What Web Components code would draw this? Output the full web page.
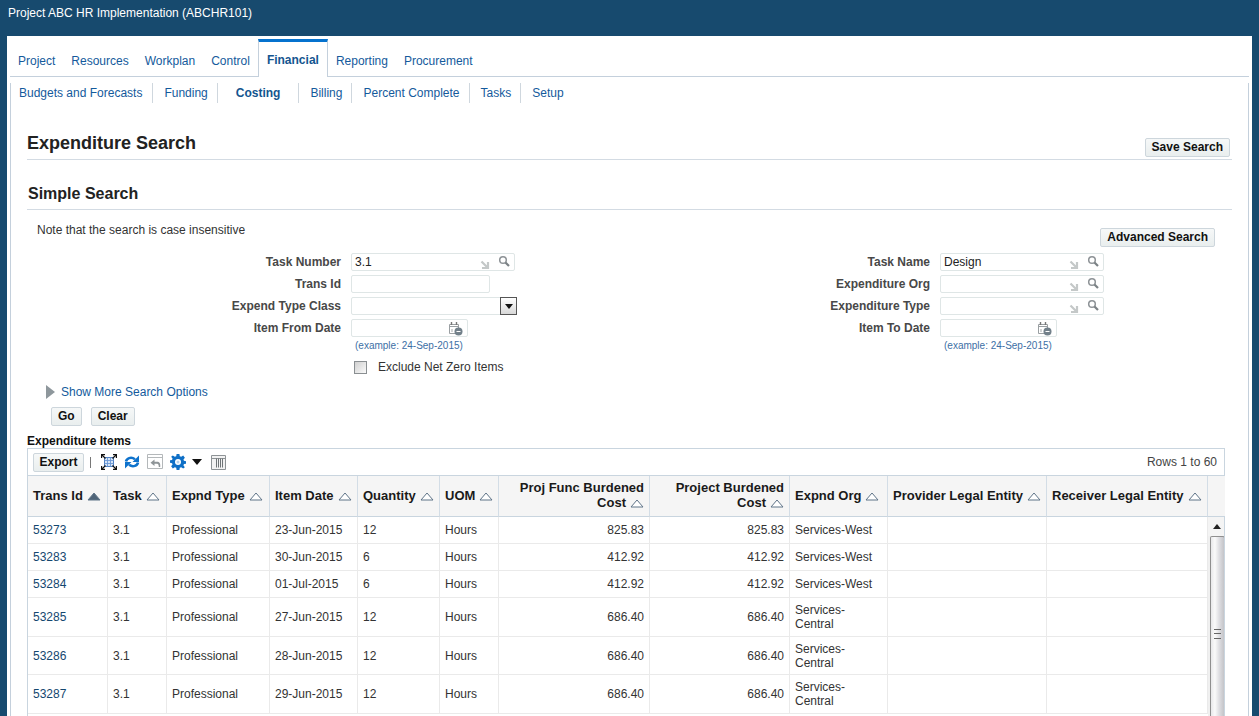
<!DOCTYPE html>
<html lang="en"><head><meta charset="utf-8"><title>Expenditure Search</title>
<style>
html,body{margin:0;height:716px;overflow:hidden;background:#174a6e;font:12px "Liberation Sans",Arial,sans-serif;color:#333}
</style></head><body>
<hr-app></hr-app>
<script>
const ICONS={
 lov:`<svg width="36" height="16" viewBox="0 0 36 16"><path d="M3.500 7.500l6 6M10 8v6H4" fill="none" stroke="#c4c8c8" stroke-width="2.200"/><circle cx="25" cy="6" r="3.300" fill="none" stroke="#8d9296" stroke-width="1.500"/><path d="M27.500 8.500l3.500 3.500" stroke="#7c8286" stroke-width="2.200"/></svg>`,
 cal:`<svg width="15" height="15" viewBox="0 0 15 15"><path d="M1.500 3.500h9v9h-9z" fill="#fff" stroke="#9a9fa2"/><path d="M3.500 1v3M8.500 1v3" stroke="#777" stroke-width="1.400"/><path d="M1.500 5.500h9" stroke="#9a9fa2"/><path d="M4 8v3" stroke="#a5a9ab"/><circle cx="10.500" cy="10.500" r="4" fill="#72808a"/><path d="M8.500 10.500h4" stroke="#fff"/></svg>`,
 detach:`<svg width="16" height="16" viewBox="0 0 16 16"><rect x="3.500" y="3.500" width="9" height="9" fill="#d5e4f7" stroke="#4f7fc0"/><path d="M6.500 3.500v9M9.500 3.500v9M3.500 6.500h9M3.500 9.500h9" stroke="#6c98d6" stroke-width=".9"/><path d="M1 1l3.500 3.500M15 1l-3.500 3.500M1 15l3.500-3.500M15 15l-3.500-3.500" stroke="#111" stroke-width="1.200"/><path d="M.6 4V.6H4M12 .6h3.400V4M.6 12v3.400H4M15.400 12v3.400H12" fill="none" stroke="#111" stroke-width="1.200"/></svg>`,
 refresh:`<svg width="16" height="16" viewBox="0 0 16 16"><path d="M2 7.500C2.600 4.500 6.800 2.300 11 5.200" fill="none" stroke="#0e72cc" stroke-width="2.600"/><path d="M15 1.500V8H8.500z" fill="#0e72cc"/><path d="M14 8.500C13.400 11.500 9.200 13.700 5 10.800" fill="none" stroke="#0e72cc" stroke-width="2.600"/><path d="M1 14.500V8h6.500z" fill="#0e72cc"/></svg>`,
 revert:`<svg width="16" height="16" viewBox="0 0 16 16"><path d="M.5 .5h15v14H.5z" fill="#fff" stroke="#b4b8ba"/><path d="M.5 3.500h15" stroke="#b4b8ba"/><path d="M7.500 5.500L3.500 8.800l4 3.200V9.800h2.500c1.200 0 1.800.9 1.800 3.200h1.400c.5-3.800-.8-5.300-3-5.300H7.500z" fill="#8f9598"/></svg>`,
 gear:`<svg width="16" height="16" viewBox="0 0 17 17"><path d="M7 0h3l.4 2.300 1.500.7L14 1.700 15.800 4 14.300 5.800l.5 1.500 2.200.4v2.600l-2.200.4-.5 1.500 1.500 1.800L14 15.300l-2.100-1.300-1.500.7L10 17H7l-.4-2.300-1.500-.7L3 15.300 1.200 13l1.500-1.800-.5-1.500L0 9.300V6.700l2.200-.4.500-1.500L1.200 3 3 1.700 5.100 3l1.500-.7z" fill="#0e6fc6"/><circle cx="8.500" cy="8.500" r="3.200" fill="#fff"/><circle cx="8.500" cy="8.500" r="1.600" fill="#0e6fc6" opacity=".3"/></svg>`,
 drop:`<svg width="10" height="6" viewBox="0 0 10 6"><path d="M0 0h10L5 6z" fill="#111"/></svg>`,
 freeze:`<svg width="15" height="15" viewBox="0 0 15 15"><path d="M.5 .5h14v14H.5z" fill="#f2f2f2" stroke="#8e9396"/><path d="M.5 3.500h14" stroke="#8e9396"/><path d="M5.500 3.500v9M7.500 3.500v9M9.500 3.500v9M11.500 3.500v9" stroke="#6f7477"/></svg>`
};
function el(name,html,init){
 customElements.define(name,class extends HTMLElement{
  connectedCallback(){ if(this.shadowRoot) return; const r=this.attachShadow({mode:'open'}); r.innerHTML=typeof html==='function'?html(this):html; if(init) init(r,this);}
 });
}
el('x-btn',h=>`<style>:host{display:inline-flex}button{all:unset;box-sizing:border-box;display:block;height:19px;padding:0 ${h.getAttribute('pad')||6}px;border:1px solid #cdd6dc;border-radius:2px;background:linear-gradient(#f6f8f8,#e9eeee);font:bold 12px/17px "Liberation Sans",Arial,sans-serif;color:#111}</style><button><slot></slot></button>`);
el('app-header',`<style>:host{display:flex;align-items:flex-start;height:36px;box-sizing:border-box;padding:6px 8px 0;color:#fff;font-size:12px;line-height:14px}</style><slot></slot>`);
el('main-tabs',`<style>:host{display:flex;height:41px;box-sizing:border-box;margin:0 3px;padding:3px 0 0 0;border-bottom:1px solid #c4d0dc}</style><slot></slot>`);
el('main-tab',`<style>
:host{display:block;box-sizing:border-box;height:38px;padding:15px 8px 0;color:#145a9c;font-size:12px;line-height:14px}
:host([active]){height:38px;margin-bottom:-1px;padding:11px 8px 0;border-top:3px solid #0572ce;border-left:1px solid #c4d0dc;border-right:1px solid #c4d0dc;background:#fff;font-weight:bold;color:#14558f}
</style><slot></slot>`);
el('sub-tabs',`<style>:host{display:flex;align-items:center;height:20px;margin-top:6px}</style><slot></slot>`);
el('sub-tab',`<style>
:host{display:block;box-sizing:border-box;height:20px;padding:3px 9px 0 11px;border-right:1px solid #cfd7de;color:#145a9c;font-size:12px;line-height:14px}
:host(:first-child){padding:3px 10px 0 8px}
:host(:last-child){border-right:0}
:host([active]){padding:3px 18px 0 18px;font-weight:bold;color:#14558f}
</style><slot></slot>`);
el('page-title',`<style>
:host{display:flex;justify-content:space-between;align-items:flex-end;box-sizing:border-box;border-bottom:1px solid #d3dbe3;height:30px;padding:0 2px 2px 0}
h1{margin:0 0 3px;font:bold 18px/21px "Liberation Sans",Arial,sans-serif;color:#222}
</style><h1><slot></slot></h1><slot name="act"></slot>`);
el('sec-title',`<style>
:host{display:block;box-sizing:border-box;height:26px;border-bottom:1px solid #d3dbe3}
h2{margin:0 0 0 1px;font:bold 16px/19px "Liberation Sans",Arial,sans-serif;color:#222}
</style><h2><slot></slot></h2>`);
el('form-row',h=>{
 const t=h.getAttribute('type')||'text',v=h.getAttribute('value')||'';
 const w={lov:164,text:139,select:166,date:117}[t];
 const icon=t==='lov'?`<span class="i lov">${ICONS.lov}</span>`:t==='date'?`<span class="i date">${ICONS.cal}</span>`:t==='select'?`<span class="dd">${ICONS.drop}</span>`:'';
 return `<style>
 :host{display:flex;align-items:center;height:22px}
 label{box-sizing:border-box;width:314px;text-align:right;font-weight:bold;color:#484848;line-height:14px}
 .f{position:relative;box-sizing:border-box;width:${w}px;height:18px;margin-left:10px;padding-left:3px;border:1px solid #dfe6e6;border-radius:2px;background:#fff;line-height:16px;color:#222}
 .i{position:absolute;top:0;line-height:0}.lov{right:0}.date{right:4px;top:1px}
 .dd{position:absolute;right:-1px;top:-1px;box-sizing:border-box;width:17px;height:18px;border:1px solid #555;background:linear-gradient(#fff,#d8d8d8);display:flex;align-items:center;justify-content:center}
 .dd svg{width:8px;height:5px}
 </style><label><slot></slot></label><div class="f">${v}${icon}</div>`;
});
el('form-hint',`<style>:host{display:block;height:15px;margin-left:328px;font-size:10px;line-height:14px;color:#3d6fa5}</style><slot></slot>`);
el('form-check',`<style>
:host{display:flex;align-items:center;margin:3px 0 0 327px;height:20px}
i{box-sizing:border-box;width:13px;height:13px;border:1px solid #8a8f92;background:linear-gradient(135deg,#d0d0d0,#fafafa);margin-right:11px}
span{color:#333;line-height:14px}
</style><i></i><span><slot></slot></span>`);
el('show-more',`<style>
:host{display:flex;align-items:center;height:16px;margin:7px 0 0 19px}
i{width:0;height:0;border-left:9px solid #8e979c;border-top:7px solid transparent;border-bottom:7px solid transparent;margin-right:6px}
span{color:#145a9c}
</style><i></i><span><slot></slot></span>`);
el('search-form',`<style>:host{display:grid;grid-template-columns:589px 1fr}</style><slot></slot>`);
const cols=[80,59,103,88,82,59,151,140,98,159,161,17];
const head=[['Trans Id',1],['Task'],['Expnd Type'],['Item Date'],['Quantity'],['UOM'],['Proj Func Burdened<br>Cost',0,1],['Project Burdened<br>Cost',0,1],['Expnd Org'],['Provider Legal Entity'],['Receiver Legal Entity'],['']];
const rows=[
['53273','23-Jun-2015','12','825.83','Services-West',27],
['53283','30-Jun-2015','6','412.92','Services-West',27],
['53284','01-Jul-2015','6','412.92','Services-West',27],
['53285','27-Jun-2015','12','686.40','Services-<br>Central',39],
['53286','28-Jun-2015','12','686.40','Services-<br>Central',38],
['53287','29-Jun-2015','12','686.40','Services-<br>Central',39]];
const tri=f=>`<svg class="s" width="14" height="9" viewBox="0 0 14 9"><path d="M7 1L13 8H1z" fill="${f?'#4f6478':'#fff'}" stroke="#5f7488"/></svg>`;
const colgroup=c=>`<colgroup>${c.map(w=>`<col style="width:${w}px">`).join('')}</colgroup>`;
el('data-table',()=>`<style>
:host{display:block;box-sizing:border-box;width:1198px;border:1px solid #c9d5df;height:300px}
.tb{display:flex;align-items:center;box-sizing:border-box;height:27px;padding:0 7px 0 5px;border-bottom:1px solid #c9d5df}
.tb svg{display:block}
.tb span.ic{margin-right:7px}
.sep{width:1px;height:11px;background:#777;margin:0 10px 0 6px}
.rows{margin-left:auto;color:#444}
table{border-collapse:separate;border-spacing:0;table-layout:fixed}
th{box-sizing:border-box;height:41px;padding:0 5px 2px;background:#f5f5f5;border-right:1px solid #d3dde6;border-bottom:1px solid #c9d5df;font:bold 13px/15px "Liberation Sans",Arial,sans-serif;color:#1a1a1a;text-align:left;white-space:nowrap}
th.r{text-align:right}
th:last-child{border-right:0}
.s{vertical-align:-1px;margin-left:4px}
.body{display:flex;height:260px;overflow:hidden}
td{box-sizing:border-box;padding:0 5px;border-right:1px solid #eaeaea;border-bottom:1px solid #eaeaea;line-height:14px;color:#333}
td.r{text-align:right}
td.a{color:#14476f}
.sb{width:17px;flex:none;background:#f0f0f0}
.up{height:19px;display:flex;align-items:center;justify-content:center;background:#f4f4f4}
.th{position:relative;box-sizing:border-box;margin:0 0 0 2px;width:15px;height:300px;border:1px solid #8f8f8f;border-bottom:0;border-radius:2px 2px 0 0;background:linear-gradient(90deg,#e8e8ea,#fafafa 30%,#dcdce0 65%,#c4c4c8)}
.g{position:absolute;left:3px;top:92px;width:7px;height:8px;border-top:1px solid #666;border-bottom:1px solid #666}
.g:after{content:"";position:absolute;left:0;right:0;top:3px;height:1px;background:#666}
</style>
<div class="tb"><x-btn pad="5.500">Export</x-btn><span class="sep"></span>
<span class="ic">${ICONS.detach}</span><span class="ic">${ICONS.refresh}</span><span class="ic">${ICONS.revert}</span><span class="ic" style="margin-right:6px">${ICONS.gear}</span><span class="ic" style="margin-right:9px">${ICONS.drop}</span>${ICONS.freeze}<span class="rows">Rows 1 to 60</span></div>
<table style="width:1196px">${colgroup(cols)}
<thead><tr>${head.map(h=>`<th class="${h[2]?'r':''}">${h[0]}${h[0]?tri(h[1]):''}</th>`).join('')}</tr></thead></table>
<div class="body"><table style="width:1179px;height:197px;flex:none">${colgroup(cols.slice(0,11))}
<tbody>${rows.map(r=>`<tr style="height:${r[5]}px"><td class="a">${r[0]}</td><td>3.1</td><td>Professional</td><td>${r[1]}</td><td>${r[2]}</td><td>Hours</td><td class="r">${r[3]}</td><td class="r">${r[3]}</td><td>${r[4]}</td><td></td><td></td></tr>`).join('')}</tbody></table>
<div class="sb"><div class="up"><svg width="8" height="5" viewBox="0 0 8 5"><path d="M4 0l4 5H0z" fill="#222"/></svg></div><div class="th"><div class="g"></div></div></div></div>`);
el('page-panel',`<style>
:host{display:block;box-sizing:border-box;height:680px;margin:0 7px 0 7px;background:#fff;overflow:hidden}
.in{box-sizing:border-box;height:640px;margin:0 3px;border:solid #c4d0dc;border-width:0 1px}
</style><slot name="tabs"></slot><div class="in"><slot></slot></div>`);
el('page-body',`<style>:host{display:block;padding:27px 16px 0 16px}</style><slot></slot>`);
el('hr-app',`<style>
:host{display:block}
.note{display:flex;justify-content:space-between;height:28px;padding:13px 17px 0 10px}
.note span{line-height:14px}
.note x-btn{margin-top:5px}
.btns{display:flex;gap:9px;margin:7px 0 0 24px}
.cap{font-weight:bold;color:#111;line-height:14px;margin-top:8px;height:14px}
.gap{height:24px}
</style>
<app-header>Project ABC HR Implementation (ABCHR101)</app-header>
<page-panel>
<main-tabs slot="tabs"><main-tab>Project</main-tab><main-tab>Resources</main-tab><main-tab>Workplan</main-tab><main-tab>Control</main-tab><main-tab active>Financial</main-tab><main-tab>Reporting</main-tab><main-tab>Procurement</main-tab></main-tabs>
<sub-tabs><sub-tab>Budgets and Forecasts</sub-tab><sub-tab>Funding</sub-tab><sub-tab active>Costing</sub-tab><sub-tab>Billing</sub-tab><sub-tab>Percent Complete</sub-tab><sub-tab>Tasks</sub-tab><sub-tab>Setup</sub-tab></sub-tabs>
<page-body>
<page-title>Expenditure Search<x-btn slot="act">Save Search</x-btn></page-title>
<div class="gap"></div>
<sec-title>Simple Search</sec-title>
<div class="note"><span>Note that the search is case insensitive</span><x-btn>Advanced Search</x-btn></div>
<search-form>
<div><form-row type="lov" value="3.1">Task Number</form-row><form-row type="text">Trans Id</form-row><form-row type="select">Expend Type Class</form-row><form-row type="date">Item From Date</form-row><form-hint>(example: 24-Sep-2015)</form-hint><form-check>Exclude Net Zero Items</form-check></div>
<div><form-row type="lov" value="Design">Task Name</form-row><form-row type="lov">Expenditure Org</form-row><form-row type="lov">Expenditure Type</form-row><form-row type="date">Item To Date</form-row><form-hint>(example: 24-Sep-2015)</form-hint></div>
</search-form>
<show-more>Show More Search Options</show-more>
<div class="btns"><x-btn>Go</x-btn><x-btn>Clear</x-btn></div>
<div class="cap">Expenditure Items</div>
<data-table></data-table>
</page-body>
</page-panel>`);
</script>
</body></html>
